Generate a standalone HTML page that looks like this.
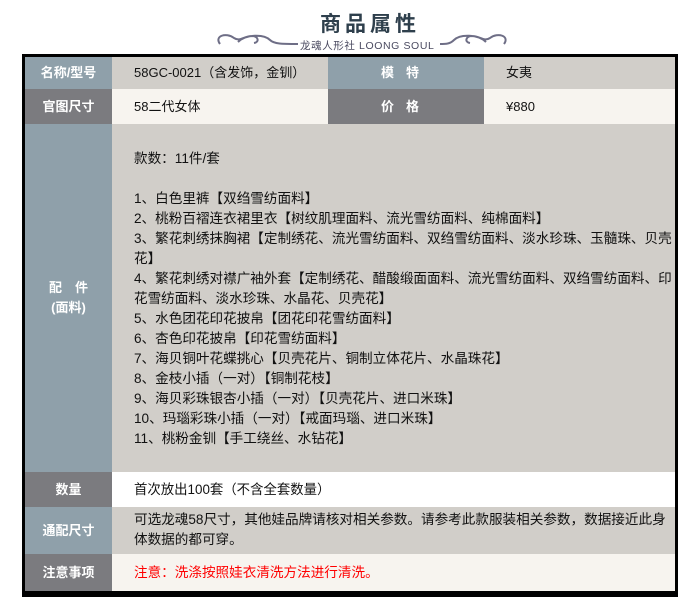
<!DOCTYPE html>
<html><head><meta charset="utf-8"><style>
*{margin:0;padding:0;box-sizing:border-box}
body{width:700px;height:613px;background:#fff;font-family:"Liberation Sans","Noto Sans CJK SC",sans-serif;position:relative;overflow:hidden}
.title{position:absolute;left:0;width:740px;top:8px;text-align:center;font-size:21px;letter-spacing:4px;color:#2e3f4c;font-weight:bold}
.sub{position:absolute;left:300px;top:38px;font-size:10.5px;color:#4a4a60;letter-spacing:0.6px;white-space:nowrap}
.tbl{position:absolute;left:22px;top:54px;width:656px;height:543px;border:3px solid #000;border-bottom-width:6px;background:#555}
.c{position:absolute;font-size:13px;white-space:nowrap;color:#111;line-height:20px}
.l{color:#fff;font-weight:bold;text-align:center;display:flex;align-items:center;justify-content:center;flex-direction:column}
.b{background:#8fa0aa}.g{background:#7b7b7f}
.v{padding-left:22px;display:flex;align-items:center}
</style></head><body>
<div class="title">商品属性</div>
<svg style="position:absolute;left:212px;top:30px" width="296" height="20">
<g fill="none" stroke="#6e6e86" stroke-width="2">
<path d="M8 14 C2 6 14 2 22 8 C28 12 32 6 40 6 C46 6 48 12 42 13 M26 12 C34 4 52 4 58 10 C62 14 70 14 86 14"/>
<path d="M292 14 C298 6 286 2 278 8 C272 12 268 6 260 6 C254 6 252 12 258 13 M274 12 C266 4 248 4 242 10 C238 14 234 14 228 14"/>
</g></svg>
<div class="sub">龙魂人形社 LOONG SOUL</div>
<div class="tbl">
<div class="c l b" style="left:0;top:0;width:87px;height:32px">名称/型号</div>
<div class="c v" style="left:87px;top:0;width:216px;height:32px;background:#d1cec9">58GC-0021（含发饰，金钏）</div>
<div class="c l b" style="left:303px;top:0;width:156px;height:32px;letter-spacing:12px">模特</div>
<div class="c v" style="left:459px;top:0;width:191px;height:32px;background:#d1cec9">女夷</div>
<div class="c l g" style="left:0;top:32px;width:87px;height:35px">官图尺寸</div>
<div class="c v" style="left:87px;top:32px;width:216px;height:35px;background:#f7f4ef">58二代女体</div>
<div class="c l g" style="left:303px;top:32px;width:156px;height:35px;letter-spacing:12px">价格</div>
<div class="c v" style="left:459px;top:32px;width:191px;height:35px;background:#f7f4ef">¥880</div>
<div class="c l b" style="left:0;top:67px;width:87px;height:348px">配　件<br>(面料)</div>
<div class="c" style="left:87px;top:67px;width:563px;height:348px;background:#d1cec9;padding:25px 0 0 22px;font-size:13.6px">款数：11件/套<br><br>1、白色里裤【双绉雪纺面料】<br>2、桃粉百褶连衣裙里衣【树纹肌理面料、流光雪纺面料、纯棉面料】<br>3、繁花刺绣抹胸裙【定制绣花、流光雪纺面料、双绉雪纺面料、淡水珍珠、玉髓珠、贝壳<br>花】<br>4、繁花刺绣对襟广袖外套【定制绣花、醋酸缎面面料、流光雪纺面料、双绉雪纺面料、印<br>花雪纺面料、淡水珍珠、水晶花、贝壳花】<br>5、水色团花印花披帛【团花印花雪纺面料】<br>6、杏色印花披帛【印花雪纺面料】<br>7、海贝铜叶花蝶挑心【贝壳花片、铜制立体花片、水晶珠花】<br>8、金枝小插（一对）【铜制花枝】<br>9、海贝彩珠银杏小插（一对）【贝壳花片、进口米珠】<br>10、玛瑙彩珠小插（一对）【戒面玛瑙、进口米珠】<br>11、桃粉金钏【手工绕丝、水钻花】</div>
<div class="c l g" style="left:0;top:415px;width:87px;height:35px">数量</div>
<div class="c v" style="left:87px;top:415px;width:563px;height:35px;background:#fff;font-size:13.4px">首次放出100套（不含全套数量）</div>
<div class="c l b" style="left:0;top:450px;width:87px;height:47px">通配尺寸</div>
<div class="c" style="left:87px;top:450px;width:563px;height:47px;background:#d1cec9;padding:3px 0 0 22px;font-size:13.6px">可选龙魂58尺寸，其他娃品牌请核对相关参数。请参考此款服装相关参数，数据接近此身<br>体数据的都可穿。</div>
<div class="c l g" style="left:0;top:497px;width:87px;height:37px">注意事项</div>
<div class="c v" style="left:87px;top:497px;width:563px;height:37px;background:#f7f4ef;color:#f00;font-size:13.6px">注意：洗涤按照娃衣清洗方法进行清洗。</div>
</div>
</body></html>
